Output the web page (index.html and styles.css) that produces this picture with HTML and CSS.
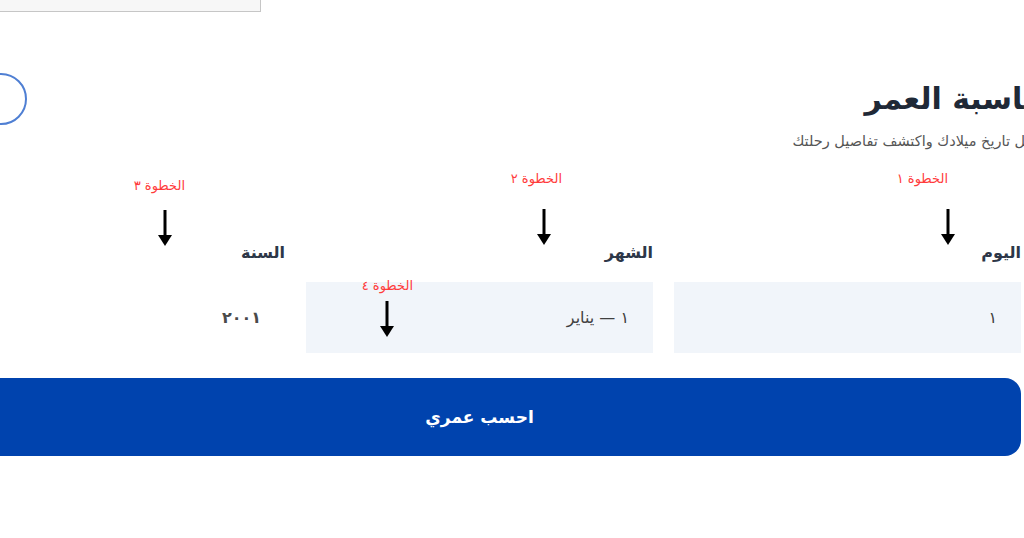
FILE: index.html
```html
<!DOCTYPE html>
<html lang="ar">
<head>
<meta charset="utf-8">
<title>حاسبة العمر</title>
<link rel="stylesheet" href="styles.css">
</head>
<body>
<div class="topbox"></div>
<main class="calc">
  <header class="head">
    <div class="head-row">
      <h1 class="title">حاسبة العمر</h1>
      <button class="circle-btn" aria-label="تبديل">
        <svg width="8" height="8" viewBox="0 0 8 8"><rect x="0" y="1" width="5" height="6" fill="#4fb4f7"/></svg>
      </button>
    </div>
    <p class="subtitle">أدخل تاريخ ميلادك واكتشف تفاصيل رحلتك</p>
  </header>

  <section class="fields">
    <div class="field">
      <div class="label">اليوم</div>
      <div class="input">١</div>
    </div>
    <div class="field">
      <div class="label">الشهر</div>
      <div class="input">١ — يناير</div>
    </div>
    <div class="field">
      <div class="label">السنة</div>
      <div class="input input-plain"><span class="year">٢٠٠١</span></div>
    </div>
  </section>

  <button class="submit">احسب عمري</button>
</main>

<div class="notes">
  <span class="step step1">الخطوة ١</span>
  <span class="step step2">الخطوة ٢</span>
  <span class="step step3">الخطوة ٣</span>
  <span class="step step4">الخطوة ٤</span>
  <svg class="arrow arrow1" width="14" height="36" viewBox="0 0 14 36"><line x1="7" y1="0" x2="7" y2="27" stroke="#000" stroke-width="3"/><polygon points="0,25 14,25 7,36" fill="#000"/></svg>
  <svg class="arrow arrow2" width="14" height="36" viewBox="0 0 14 36"><line x1="7" y1="0" x2="7" y2="27" stroke="#000" stroke-width="3"/><polygon points="0,25 14,25 7,36" fill="#000"/></svg>
  <svg class="arrow arrow3" width="14" height="36" viewBox="0 0 14 36"><line x1="7" y1="0" x2="7" y2="27" stroke="#000" stroke-width="3"/><polygon points="0,25 14,25 7,36" fill="#000"/></svg>
  <svg class="arrow arrow4" width="14" height="36" viewBox="0 0 14 36"><line x1="7" y1="0" x2="7" y2="27" stroke="#000" stroke-width="3"/><polygon points="0,25 14,25 7,36" fill="#000"/></svg>
</div>
</body>
</html>
```
FILE: styles.css
```css
html, body {
  margin: 0;
  padding: 0;
  background: #ffffff;
}
body {
  position: relative;
  width: 1024px;
  height: 538px;
  overflow: hidden;
  font-family: "DejaVu Sans", "Liberation Sans", sans-serif;
}
.topbox {
  width: 260px;
  height: 11px;
  background: #f7f7f7;
  border-right: 1px solid #c6c6c6;
  border-bottom: 1px solid #c6c6c6;
}
.calc {
  direction: rtl;
  width: 1083px;
  margin-left: -62px;
}
.head {
  margin-top: 61px;
  margin-right: -24px;
}
.head-row {
  display: flex;
  align-items: center;
  justify-content: space-between;
  height: 52px;
}
.title {
  margin: 0;
  font-size: 30px;
  font-weight: bold;
  color: #1f2937;
  line-height: 40px;
}
.circle-btn {
  width: 52px;
  height: 52px;
  margin-left: 37px;
  border-radius: 50%;
  border: 2px solid #4f7fd3;
  background: #ffffff;
  display: flex;
  align-items: center;
  justify-content: center;
  padding: 0;
}
.circle-btn svg {
  margin-right: 20px;
}
.subtitle {
  margin: 4px 0 0 0;
  font-size: 14.5px;
  line-height: 24px;
  color: #555555;
}
.fields {
  display: grid;
  grid-template-columns: 347px 347px 347px;
  column-gap: 21px;
  margin-top: 88px;
}
.field {
  display: flex;
  flex-direction: column;
}
.label {
  font-size: 16px;
  font-weight: bold;
  line-height: 24px;
  color: #2d3748;
  margin-bottom: 17px;
}
.input {
  height: 71px;
  background: #f1f5fa;
  display: flex;
  align-items: center;
  padding: 0 24px;
  font-size: 16px;
  color: #404040;
}
.input-plain {
  background: transparent;
}
.year {
  letter-spacing: 6px;
  font-weight: bold;
  color: #4a4a4a;
}
.submit {
  display: flex;
  align-items: center;
  justify-content: center;
  width: 100%;
  height: 78px;
  margin-top: 25px;
  border: none;
  border-radius: 16px;
  background: #0043ae;
  color: #ffffff;
  font-family: "DejaVu Sans", "Liberation Sans", sans-serif;
  font-size: 17px;
  font-weight: bold;
}
.notes {
  position: absolute;
  top: 0;
  left: 0;
  width: 1024px;
  height: 538px;
  pointer-events: none;
}
.step {
  position: absolute;
  direction: rtl;
  font-size: 13px;
  line-height: 18px;
  color: #ff3b3b;
  white-space: nowrap;
}
.step1 { right: 76px; top: 170px; }
.step2 { right: 462px; top: 170px; }
.step3 { right: 839px; top: 177px; }
.step4 { right: 611px; top: 277px; }
.arrow { position: absolute; }
.arrow1 { left: 941px; top: 209px; }
.arrow2 { left: 537px; top: 209px; }
.arrow3 { left: 158px; top: 210px; }
.arrow4 { left: 380px; top: 301px; }
```
